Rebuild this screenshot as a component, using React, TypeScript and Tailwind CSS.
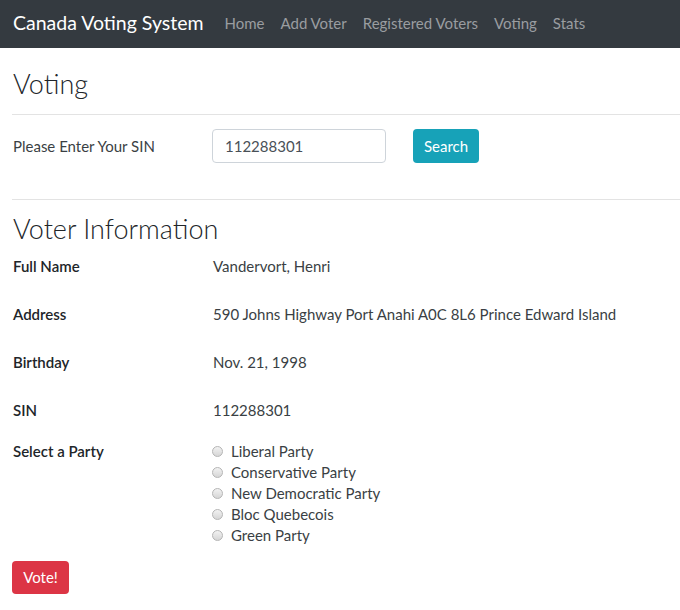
const navLinks = ["Home", "Add Voter", "Registered Voters", "Voting", "Stats"];

const parties = [
  "Liberal Party",
  "Conservative Party",
  "New Democratic Party",
  "Bloc Quebecois",
  "Green Party",
];

const info = [
  { label: "Full Name", value: "Vandervort, Henri" },
  { label: "Address", value: "590 Johns Highway Port Anahi A0C 8L6 Prince Edward Island" },
  { label: "Birthday", value: "Nov. 21, 1998" },
  { label: "SIN", value: "112288301" },
];

const Radio = ({ label }: { label: string }) => (
  <label className="flex items-center h-[21px]">
    <span className="w-[11px] h-[11px] rounded-full border border-[#b5b5b5] bg-gradient-to-b from-[#f2f2f2] to-[#d6d6d6] mr-[8px]" />
    <span className="text-[15px] text-[#3a3f44]">{label}</span>
  </label>
);

const App = () => {
  return (
    <div className="min-h-[610px] bg-white font-['Lato',sans-serif] text-[#212529]">
      <nav className="h-[48px] bg-[#343a40] flex items-center pl-[13px] pb-[2px]">
        <span className="text-[19.5px] text-white mr-[21px]">Canada Voting System</span>
        <div className="flex gap-[16px]">
          {navLinks.map((l) => (
            <span key={l} className="text-[15px] text-[#9a9da0]">
              {l}
            </span>
          ))}
        </div>
      </nav>

      <div className="pl-[12px]">
        <h2 className="mt-[18px] h-[36px] text-[27px] font-light leading-[36px] pl-[1px]">Voting</h2>
        <hr className="mt-[12px] border-[#e3e3e3]" />

        <div className="flex items-center mt-[14px] h-[34px]">
          <span className="w-[200px] pl-[1px] text-[15px] text-[#3a3f44]">Please Enter Your SIN</span>
          <input
            readOnly
            value="112288301"
            className="w-[174px] h-[34px] border border-[#ced4da] rounded-[4px] px-[12px] text-[15px] text-[#495057] outline-none"
          />
          <button className="ml-[27px] h-[34px] px-[11px] bg-[#17a2b8] rounded-[4px] text-white text-[15px]">
            Search
          </button>
        </div>

        <hr className="mt-[36px] border-[#e3e3e3]" />

        <h2 className="mt-[11px] h-[36px] text-[27px] font-light leading-[36px] pl-[1px]">Voter Information</h2>

        <div className="-mt-[5px] flex flex-col">
          {info.map((r) => (
            <div key={r.label} className="flex items-center h-[48px]">
              <span className="w-[200px] pl-[1px] text-[15px] font-semibold">{r.label}</span>
              <span className="pl-[1px] text-[15px] text-[#3a3f44]">{r.value}</span>
            </div>
          ))}
          <div className="flex mt-[7px]">
            <span className="w-[200px] pl-[1px] text-[15px] font-semibold leading-[21px]">Select a Party</span>
            <div className="flex flex-col">
              {parties.map((p) => (
                <Radio key={p} label={p} />
              ))}
            </div>
          </div>
        </div>

        <button className="mt-[15px] h-[33px] w-[57px] bg-[#dc3545] rounded-[4px] text-white text-[15px]">
          Vote!
        </button>
      </div>
    </div>
  );
};

export default App;
